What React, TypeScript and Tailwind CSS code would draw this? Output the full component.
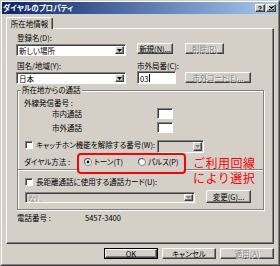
import React from "react";

const raised =
  "bg-[#d4d0c8] border border-t-white border-l-white border-r-[#404040] border-b-[#404040] shadow-[inset_-1px_-1px_0_#808080]";
const sunken =
  "border border-t-[#808080] border-l-[#808080] border-r-white border-b-white shadow-[inset_1px_1px_0_#404040]";
const disabledText = "text-[#808080] [text-shadow:1px_1px_0_#fff]";

function Btn({
  cls,
  children,
  disabled,
  isDefault,
}: {
  cls: string;
  children: React.ReactNode;
  disabled?: boolean;
  isDefault?: boolean;
}) {
  if (isDefault) {
    return (
      <div className={`border border-black flex ${cls}`}>
        <div className={`flex-1 flex items-center justify-center leading-[9px] ${raised}`}>{children}</div>
      </div>
    );
  }
  return (
    <div
      className={`flex items-center justify-center leading-[9px] whitespace-nowrap ${raised} ${
        disabled ? disabledText : ""
      } ${cls}`}
    >
      {children}
    </div>
  );
}

function Arrow({ disabled }: { disabled?: boolean }) {
  return (
    <svg width="5" height="3" viewBox="0 0 5 3">
      <path d="M0 0H5L2.5 3Z" fill={disabled ? "#808080" : "#000"} />
    </svg>
  );
}

function Combo({ cls, text, disabled }: { cls: string; text?: string; disabled?: boolean }) {
  return (
    <div className={`flex ${sunken} ${disabled ? "bg-[#d4d0c8]" : "bg-white"} ${cls}`}>
      <div
        className={`flex-1 flex items-center pl-[2px] pt-[1px] leading-[9px] whitespace-nowrap overflow-hidden ${
          disabled ? disabledText : ""
        }`}
      >
        {text}
      </div>
      <div className={`m-[1px] w-[9px] flex items-center justify-center ${raised}`}>
        <Arrow disabled={disabled} />
      </div>
    </div>
  );
}

function Field({ cls, children }: { cls: string; children?: React.ReactNode }) {
  return (
    <div className={`flex items-center pl-[2px] pt-[1px] bg-white leading-[9px] ${sunken} ${cls}`}>
      {children}
    </div>
  );
}

function Check() {
  return <div className={`w-[8px] h-[8px] bg-white shrink-0 ${sunken}`} />;
}

function Radio({ checked }: { checked?: boolean }) {
  return (
    <svg width="8" height="8" viewBox="0 0 8 8" className="shrink-0">
      <circle cx="4" cy="4" r="3.5" fill="#fff" stroke="#808080" strokeWidth="1" />
      <path d="M1.2 5.5A3 3 0 0 1 5.5 1.2" fill="none" stroke="#404040" strokeWidth="0.8" />
      {checked && <circle cx="4" cy="4" r="1.4" fill="#000" />}
    </svg>
  );
}

export default function App() {
  return (
    <div className="w-[280px] h-[266px] border border-t-[#d4d0c8] border-l-[#d4d0c8] border-r-[#404040] border-b-[#404040] bg-[#d4d0c8] font-['Noto_Sans_CJK_JP','Noto_Sans_CJK_SC',sans-serif] [font-feature-settings:'palt'] text-[7.5px] text-black leading-[10px]">
      <div className="h-full border border-t-white border-l-white border-r-[#808080] border-b-[#808080] flex flex-col">
        {/* Title bar */}
        <div className="h-[12px] flex items-center bg-[linear-gradient(to_right,#0a246a,#a6caf0)] pl-[1px] pr-[2px]">
          <span className="text-white font-bold leading-[10px]">ダイヤルのプロパティ</span>
          <div className="ml-auto flex gap-[1px]">
            <div className={`w-[10px] h-[8px] flex items-center justify-center ${raised}`}>
              <span className="font-['Liberation_Sans',sans-serif] font-bold text-[7px] leading-[7px]">?</span>
            </div>
            <div className={`w-[10px] h-[8px] flex items-center justify-center ${raised}`}>
              <svg width="5" height="4" viewBox="0 0 5 4">
                <path d="M0.3 0.2L4.7 3.8M4.7 0.2L0.3 3.8" stroke="#000" strokeWidth="1.1" />
              </svg>
            </div>
          </div>
        </div>

        {/* Body */}
        <div className="px-[4px] flex flex-col">
          {/* Tab */}
          <div className="mt-[3px] flex">
            <div className="relative z-[1] mb-[-1px] w-[47px] h-[12px] bg-[#d4d0c8] border-t border-l border-r border-t-white border-l-white border-r-[#404040] shadow-[inset_-1px_0_0_#808080] rounded-t-[2px] flex items-center justify-center leading-[9px]">
              所在地情報
            </div>
          </div>

          {/* Panel */}
          <div className={`h-[216px] flex flex-col ${raised}`}>
            <div className="mt-[4px] h-[10px] pl-[10px] flex items-center">登録名(D):</div>
            <div className="h-[13px] flex items-start pl-[9px]">
              <Combo cls="mt-[1px] w-[110px] h-[12px]" text="新しい場所" />
              <Btn cls="ml-[11px] w-[36px] h-[11px]">新規(N)...</Btn>
              <Btn disabled cls="ml-[12px] w-[39px] h-[11px]">
                削除(R)
              </Btn>
            </div>
            <div className="mt-[5px] h-[10px] pl-[10px] flex items-center">
              <span className="w-[120px]">国名/地域(Y):</span>
              <span>市外局番(C):</span>
            </div>
            <div className="h-[13px] flex items-start pl-[9px]">
              <Combo cls="mt-[1px] w-[110px] h-[12px]" text="日本" />
              <Field cls="ml-[11px] w-[39px] h-[13px]">
                <span>03</span>
                <span className="ml-[1px] w-px h-[8px] bg-black" />
              </Field>
              <Btn disabled cls="ml-[9px] mt-[1px] w-[66px] h-[11px]">
                市外コード(E)...
              </Btn>
            </div>

            {/* Group box */}
            <div className="relative mt-[6px] ml-[10px] w-[247px] h-[120px] border border-[#808080] shadow-[inset_1px_1px_0_#fff,1px_1px_0_#fff] flex flex-col">
              <span className="absolute left-[3px] top-[-6px] px-[1px] bg-[#d4d0c8] leading-[10px]">
                所在地からの通話
              </span>
              <div className="mt-[7px] h-[10px] pl-[6px] flex items-center">外線発信番号 :</div>
              <div className="h-[11px] pl-[34px] flex items-center">
                <span className="w-[105px]">市内通話</span>
                <Field cls="w-[16px] h-[11px]" />
              </div>
              <div className="mt-[3px] h-[11px] pl-[34px] flex items-center">
                <span className="w-[105px]">市外通話</span>
                <Field cls="w-[16px] h-[11px]" />
              </div>
              <div className="mt-[7px] h-[13px] pl-[7px] flex items-start">
                <div className="w-[132px] h-[10px] flex items-center gap-[3px]">
                  <Check />
                  <span className="whitespace-nowrap">キャッチホン機能を解除する番号(W):</span>
                </div>
                <Combo disabled cls="w-[47px] h-[13px]" />
              </div>
              <div className="relative mt-[4px] h-[10px] pl-[6px] flex items-center">
                <div className="absolute left-[59px] top-[-4px] w-[109px] h-[21px] border-2 border-[#ff0000] rounded-[4px] bg-[#d4d0c8]" />
                <span className="w-[60px] whitespace-nowrap">ダイヤル方法 :</span>
                <div className="relative z-[1] flex items-center">
                  <Radio checked />
                  <span className="ml-[2px] w-[44px] whitespace-nowrap">トーン(T)</span>
                  <Radio />
                  <span className="ml-[2px] whitespace-nowrap">パルス(P)</span>
                </div>
                <div className="absolute left-[175px] top-[-2px] z-[1] text-[#ff0000] text-[12px] leading-[15px] tracking-[0.5px] [font-feature-settings:normal] whitespace-nowrap">
                  ご利用回線
                  <br />
                  により選択
                </div>
              </div>
              <div className="mt-[2px] h-[2px] border-t border-t-[#808080] border-b border-b-white" />
              <div className="mt-[6px] h-[10px] pl-[7px] flex items-center gap-[3px]">
                <Check />
                <span className="whitespace-nowrap">長距離通話に使用する通話カード(U):</span>
              </div>
              <div className="mt-[3px] h-[13px] pl-[7px] flex items-start">
                <Combo disabled cls="mt-[2px] w-[170px] h-[11px]" text="なし" />
                <Btn cls="ml-[11px] w-[45px] h-[13px]">変更(G)...</Btn>
              </div>
            </div>

            <div className="mt-[3px] h-[10px] pl-[10px] flex items-center">
              <span className="w-[68px]">電話番号 :</span>
              <span>5457-3400</span>
            </div>
          </div>

          {/* Bottom buttons */}
          <div className="mt-[4px] flex justify-end gap-[4px]">
            <Btn isDefault cls="w-[54px] h-[11px]">
              OK
            </Btn>
            <Btn cls="w-[54px] h-[11px]">キャンセル</Btn>
            <Btn disabled cls="w-[54px] h-[11px]">
              適用(A)
            </Btn>
          </div>
        </div>
      </div>
    </div>
  );
}
